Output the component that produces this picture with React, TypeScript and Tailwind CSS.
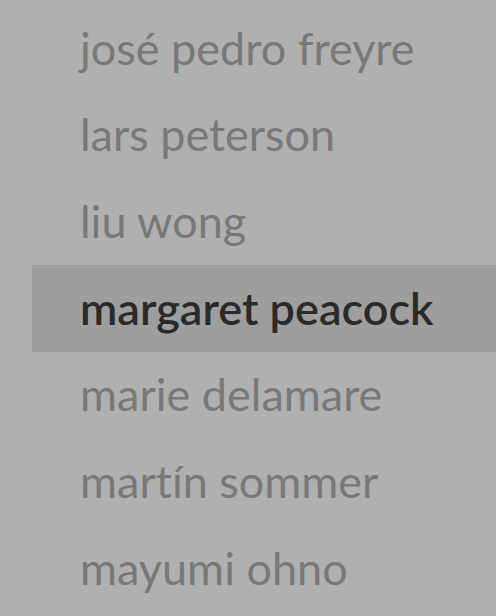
import React from "react";

const names = [
  "josé pedro freyre",
  "lars peterson",
  "liu wong",
  "margaret peacock",
  "marie delamare",
  "martín sommer",
  "mayumi ohno",
];

export default function App() {
  return (
    <div
      className="w-[496px] h-[616px] overflow-hidden bg-[#b0b0b0] pt-[5px] pl-[32px] [font-variant-ligatures:none]"
      style={{ fontFamily: "Lato, 'Noto Sans', sans-serif" }}
    >
      {names.map((n, i) => (
        <div
          key={n}
          className={
            "h-[86.67px] flex items-center pl-[48px] text-[45px] leading-none " +
            (i === 3 ? "bg-[#9e9e9e] text-[#2a2a2a] font-semibold" : "text-[#787878] font-normal")
          }
        >
          {n}
        </div>
      ))}
    </div>
  );
}
